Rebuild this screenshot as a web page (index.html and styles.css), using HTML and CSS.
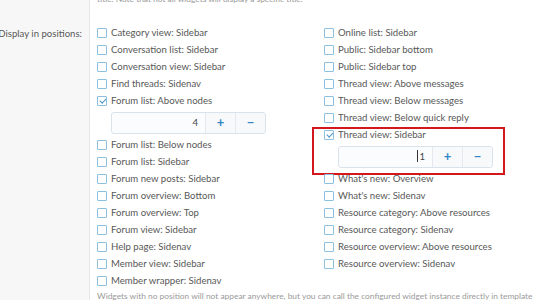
FILE: index.html
```html
<!DOCTYPE html>
<html lang="en">
<head>
    <meta charset="UTF-8">
    <title>Widget options</title>
    <link rel="stylesheet" href="styles.css">
</head>
<body>
    <div class="form-row">
        <div class="form-label"></div>
        <div class="form-input">
            <div class="hint hint-top">title. Note that not all widgets will display a specific title.</div>
        </div>
    </div>
    <div class="form-row">
        <div class="form-label"><span>Display in positions:</span></div>
        <div class="form-input">
            <div class="positions">
                <ul class="col">
                    <li><span class="box"></span>Category view: Sidebar</li>
                    <li><span class="box"></span>Conversation list: Sidebar</li>
                    <li><span class="box"></span>Conversation view: Sidebar</li>
                    <li><span class="box"></span>Find threads: Sidenav</li>
                    <li>
                        <span class="box checked"></span>Forum list: Above nodes
                        <div class="spinner">
                            <div class="spin-input">4</div>
                            <div class="spin-btn">+</div>
                            <div class="spin-btn">&minus;</div>
                        </div>
                    </li>
                    <li><span class="box"></span>Forum list: Below nodes</li>
                    <li><span class="box"></span>Forum list: Sidebar</li>
                    <li><span class="box"></span>Forum new posts: Sidebar</li>
                    <li><span class="box"></span>Forum overview: Bottom</li>
                    <li><span class="box"></span>Forum overview: Top</li>
                    <li><span class="box"></span>Forum view: Sidebar</li>
                    <li><span class="box"></span>Help page: Sidenav</li>
                    <li><span class="box"></span>Member view: Sidebar</li>
                    <li><span class="box"></span>Member wrapper: Sidenav</li>
                </ul>
                <ul class="col">
                    <li><span class="box"></span>Online list: Sidebar</li>
                    <li><span class="box"></span>Public: Sidebar bottom</li>
                    <li><span class="box"></span>Public: Sidebar top</li>
                    <li><span class="box"></span>Thread view: Above messages</li>
                    <li><span class="box"></span>Thread view: Below messages</li>
                    <li><span class="box"></span>Thread view: Below quick reply</li>
                    <li class="marked">
                        <span class="box checked"></span>Thread view: Sidebar
                        <div class="spinner">
                            <div class="spin-input"><span class="caret"></span>1</div>
                            <div class="spin-btn">+</div>
                            <div class="spin-btn">&minus;</div>
                        </div>
                    </li>
                    <li><span class="box"></span>What's new: Overview</li>
                    <li><span class="box"></span>What's new: Sidenav</li>
                    <li><span class="box"></span>Resource category: Above resources</li>
                    <li><span class="box"></span>Resource category: Sidenav</li>
                    <li><span class="box"></span>Resource overview: Above resources</li>
                    <li><span class="box"></span>Resource overview: Sidenav</li>
                </ul>
            </div>
            <div class="hint hint-bottom">Widgets with no position will not appear anywhere, but you can call the configured widget instance directly in template code.</div>
        </div>
    </div>
</body>
</html>
```

FILE: styles.css
```css
/* Форма настроек виджета */
body { margin: 0; font-family: Lato, "Noto Sans", sans-serif; font-size: 9.6px; color: #585858; background: #fff; overflow: hidden; }
.form-row { display: flex; }
.form-label { width: 90px; flex-shrink: 0; background: #f7f7f7; border-right: 1px solid #e6e6e6; text-align: right; padding-right: 7px; box-sizing: border-box; white-space: nowrap; }
.form-label span { display: block; margin-left: -20px; padding-top: 25px; line-height: 17px; }
.form-input { flex: 1; padding-left: 7px; min-width: 0; }
.hint { font-size: 8.4px; color: #9a9a9a; white-space: nowrap; line-height: 12px; }
.hint-top { margin-top: -7px; height: 7px; }
.hint-bottom { margin-top: 1px; }
.positions { display: flex; padding-top: 24px; }
.col { list-style: none; margin: 0; padding: 0; width: 227px; flex-shrink: 0; }
.col li { position: relative; line-height: 17px; white-space: nowrap; padding-left: 14px; }
.box { position: absolute; left: 0; top: 4px; width: 8px; height: 8px; border: 1px solid #8cc0e0; border-radius: 1px; background: #fff; }
.box.checked::after { content: ""; position: absolute; left: 2.5px; top: 0; width: 2.5px; height: 5px; border: solid #4a93c9; border-width: 0 1.3px 1.3px 0; transform: rotate(45deg); }
.spinner { display: flex; width: 155px; height: 22px; margin: 3px 0 2px; border: 1px solid #d9e3ec; border-radius: 3px; box-sizing: border-box; background: #fbfcfe; }
.spin-input { flex: 1; text-align: right; padding-right: 7px; line-height: 20px; color: #444; }
.spin-btn { width: 29px; border-left: 1px solid #e3e9ef; text-align: center; line-height: 19px; color: #3386c6; font-size: 13px; font-weight: bold; background: #f7f9fb; }
.spin-btn:last-child { border-radius: 0 3px 3px 0; }
.caret { display: inline-block; width: 1px; height: 12px; background: #333; vertical-align: -2px; margin-right: 1px; }
.marked::after { content: ""; position: absolute; left: -12px; top: 1px; width: 189px; height: 44px; border: 2px solid #d4161d; }
```
